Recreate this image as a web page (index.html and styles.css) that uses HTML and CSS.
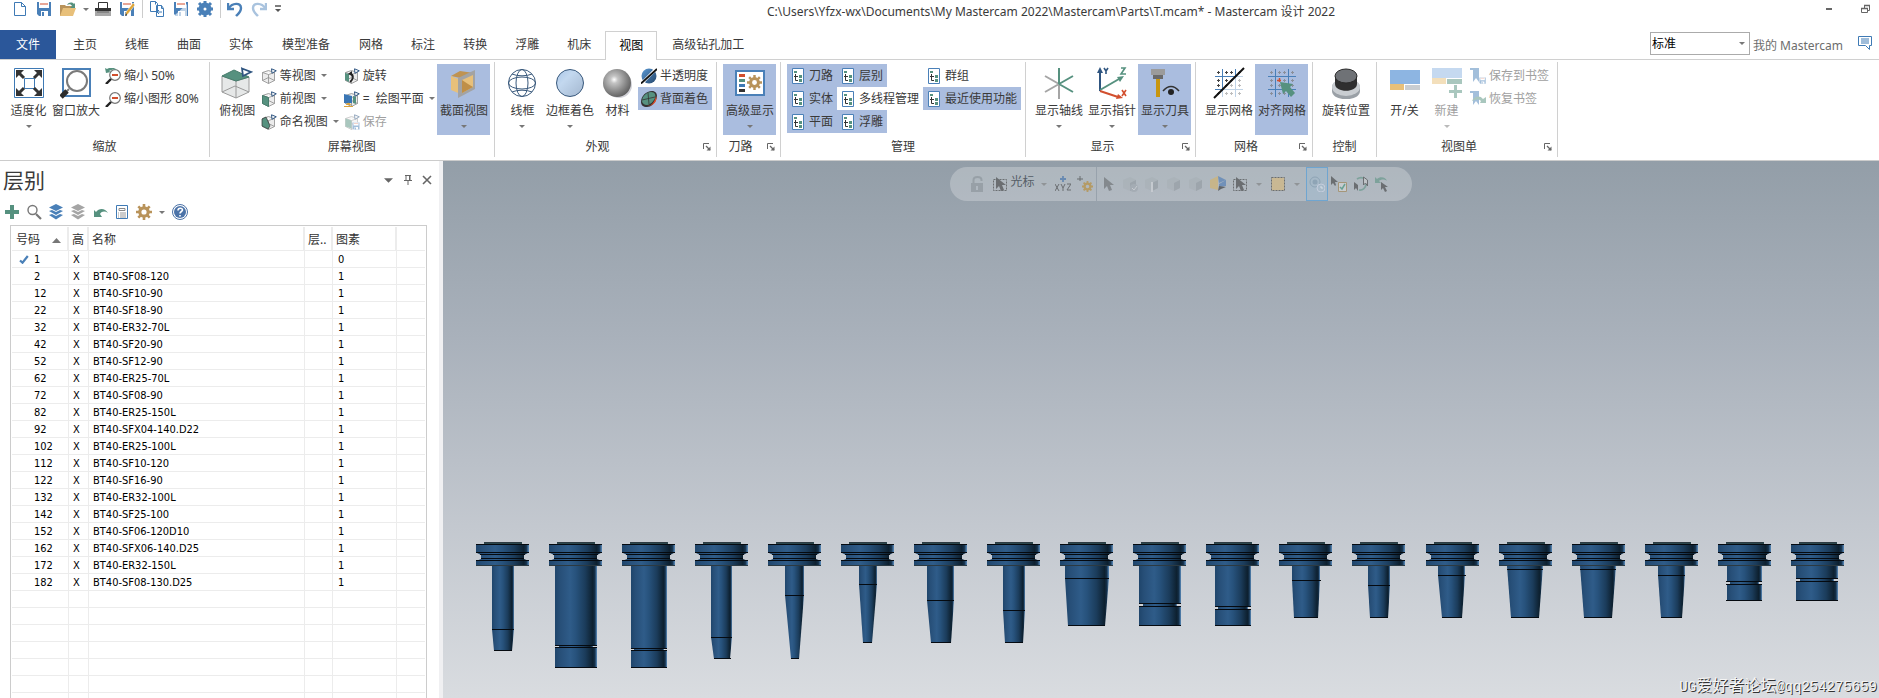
FILE: index.html
```html
<!DOCTYPE html>
<html lang="zh-CN">
<head>
<meta charset="utf-8">
<title>Mastercam 设计 2022</title>
<link rel="stylesheet" href="styles.css">
</head>
<body>
<svg class="sprite" aria-hidden="true">
  <defs>
    <linearGradient id="steel" x1="0" x2="1" y1="0" y2="0">
      <stop offset="0" stop-color="#1f456b"/><stop offset=".12" stop-color="#274f78"/><stop offset=".36" stop-color="#2f5c89"/>
      <stop offset=".5" stop-color="#27527c"/><stop offset=".72" stop-color="#1b3c5b"/><stop offset=".9" stop-color="#0d202f"/>
      <stop offset=".95" stop-color="#14304a"/><stop offset="1" stop-color="#5d8fc0"/>
    </linearGradient>
    <radialGradient id="ball" cx=".4" cy=".38" r=".65"><stop offset="0" stop-color="#fff"/><stop offset=".2" stop-color="#c4c4c4"/><stop offset=".65" stop-color="#8a8a8a"/><stop offset="1" stop-color="#5f5f5f"/></radialGradient>
    <linearGradient id="disc" x1="0" x2="1" y1="0" y2="1"><stop offset="0" stop-color="#a9c6e8"/><stop offset=".35" stop-color="#c3d8ef"/><stop offset="1" stop-color="#a3b7cf"/></linearGradient>
    <linearGradient id="disc2" x1="0" x2="1" y1="0" y2="1"><stop offset="0" stop-color="#5b9ad6"/><stop offset="1" stop-color="#24466b"/></linearGradient>
  </defs>
  <symbol id="i-new" viewBox="0 0 16 16"><path d="M2.500 1.500h7l4 4v9h-11z M9.500 1.500v4h4" fill="#fff" stroke="#3f7ab5"/></symbol>
  <symbol id="i-save" viewBox="0 0 16 16"><path d="M1 1h14v14H3l-2-2z" fill="#4a80b8"/><path d="M3 1h10v6H3z" fill="#fff"/><path d="M4 3h8" stroke="#d24f2e"/><path d="M5 10h7v5H5z" fill="#fff"/><path d="M6 11h2v4H6z" fill="#4a80b8"/></symbol>
  <symbol id="i-open" viewBox="0 0 16 16"><path d="M0 4h5l1 1h6v10H0z" fill="#b9935a"/><path d="M3 7h13l-3 8H0z" fill="#e8c07a"/><path d="M7 4c2-3 5-3 7-1l1-1v5h-5l2-2c-1-2-3-2-5-1z" fill="#56917f"/></symbol>
  <symbol id="i-print" viewBox="0 0 16 16"><path d="M3.500 1.500h9v6h-9z" fill="#fff" stroke="#333"/><path d="M0 7h16v5H0z" fill="#333"/><path d="M0 10h16v5H0z" fill="#a8a8a8"/><path d="M2 11h12" stroke="#666"/></symbol>
  <symbol id="i-saveedit" viewBox="0 0 16 16"><use href="#i-save"/><path d="M6 15l1-4 7-9 2 2-7 9z" fill="#e0a637" stroke="#fff" stroke-width=".5"/><path d="M6 15l1-3 1 2z" fill="#333"/></symbol>
  <symbol id="i-copy" viewBox="0 0 16 16"><path d="M1.500.5h5l2 2v8h-7z M7.500 4.500h5l2 3v8h-7z M12.500 4.500v3h2 M6.500.5v3" fill="#fff" stroke="#3f7ab5"/><path d="M9 11h4M10 9l-2 2 2 2" stroke="#3f7ab5" fill="none"/></symbol>
  <symbol id="i-saveas" viewBox="0 0 16 16"><use href="#i-save"/><path d="M2 14L14 3v12H3z" fill="#fff" opacity=".65"/></symbol>
  <symbol id="i-gear" viewBox="0 0 16 16"><circle cx="8" cy="8" r="4.200" fill="none" stroke="currentColor" stroke-width="3.200"/><path d="M8 0v4M8 12v4M0 8h4M12 8h4M2.300 2.300l2.800 2.800M10.900 10.900l2.800 2.800M2.300 13.700l2.800-2.800M10.900 5.100l2.800-2.800" stroke="currentColor" stroke-width="2.600"/></symbol>
  <symbol id="i-cog" viewBox="0 0 16 16"><circle cx="8" cy="8" r="4" fill="none" stroke="currentColor" stroke-width="5"/><path d="M8 0v4M8 12v4M0 8h4M12 8h4M2 2l3 3M11 11l3 3M2 14l3-3M11 5l3-3" stroke="currentColor" stroke-width="3"/></symbol>
  <symbol id="i-undo" viewBox="0 0 16 16"><path d="M1 2v6h6" fill="none" stroke="currentColor" stroke-width="2.400"/><path d="M2 7c3-5 12-6 12 0 0 4-3 6-5 8" fill="none" stroke="currentColor" stroke-width="2.400"/></symbol>
  <symbol id="i-redo" viewBox="0 0 16 16"><path d="M15 2v6H9" fill="none" stroke="currentColor" stroke-width="2.400"/><path d="M14 7C11 2 2 1 2 7c0 4 3 6 5 8" fill="none" stroke="currentColor" stroke-width="2.400"/></symbol>
  <symbol id="i-more" viewBox="0 0 6 8"><path d="M0 1h6" stroke="#555" stroke-width="1.500"/><path d="M0 4h6L3 7z" fill="#555"/></symbol>
  <symbol id="i-down" viewBox="0 0 6 3"><path d="M0 0h6L3 3z" fill="currentColor"/></symbol>
  <symbol id="i-launch" viewBox="0 0 8 8"><path d="M.5 6V.5H6" fill="none" stroke="#666"/><path d="M3 3l4 4" stroke="#666" stroke-width="1.200"/><path d="M7.500 3.500v4h-4z" fill="#666"/></symbol>

  <symbol id="i-fit" viewBox="0 0 32 32"><path d="M1.500 1.500h29v29h-29z M11.500 11.500h10v10h-10z" fill="#fff" stroke="#3f7ab5"/><path d="M4 4l7 7M28 4l-7 7M4 28l7-7M28 28l-7-7" stroke="#333" stroke-width="3"/><path d="M3 3h8l-8 8zM29 3v8l-8-8zM3 29v-8l8 8zM29 29h-8l8-8z" fill="#333"/></symbol>
  <symbol id="i-zoomwin" viewBox="0 0 32 32"><path d="M3 2h27v27H3z" fill="#fff" stroke="#4a80b8" stroke-width="2"/><circle cx="17" cy="14" r="10" fill="#fff" stroke="#7a7a7a" stroke-width="2"/><path d="M9 22l-3 3" stroke="#7a7a7a" stroke-width="2"/><path d="M7 24l-6 6" stroke="#2b2b2b" stroke-width="5"/></symbol>
  <symbol id="i-zoomout" viewBox="0 0 16 16"><circle cx="10" cy="7" r="5.300" fill="#fff" stroke="#777" stroke-width="1.200"/><path d="M7 7h6" stroke="#d24f2e" stroke-width="2"/><path d="M6 11l-5 5" stroke="#222" stroke-width="2.400"/></symbol>
  <symbol id="i-zoomhalf" viewBox="0 0 16 16"><use href="#i-zoomout"/><path d="M0 0l1 5 5-1-2-1c2-1 5-2 8-1C9-1 5-1 2 1z" fill="#56917f"/></symbol>
  <symbol id="i-cubetop" viewBox="0 0 32 32"><path d="M1 9v16l14 6 13-6V10L15 14z" fill="#e6e8e8" stroke="#9a9a9a"/><path d="M15 14v17M1 25l13-6 14 6" stroke="#9a9a9a" fill="none"/><path d="M1 9l12-6 15 7-13 4z" fill="#56917f" stroke="#477c6c"/><path d="M21 1.500l9 3.500-8 4z" fill="#fff" stroke="#2f5580" stroke-width="1.800"/></symbol>
  <symbol id="i-cube" viewBox="0 0 16 16"><path d="M1.500 4.500l6-2 6 2v8l-6 3-6-3z M1.500 4.500l6 2 6-2 M7.500 6.500v9 M1.500 12.500l6-3 6 3" fill="#ececec" stroke="#8d8d8d" stroke-width=".8"/><path d="M10.500.8l4.800 2-4.300 2.400z" fill="#fff" stroke="#2f5580"/></symbol>
  <symbol id="i-cubefront" viewBox="0 0 16 16"><use href="#i-cube"/><path d="M1.500 4.500l6 2v9l-6-3z" fill="#56917f" stroke="#477c6c"/></symbol>
  <symbol id="i-cubename" viewBox="0 0 16 16"><use href="#i-cube"/><path d="M1 5l4-2 4 9-2 3-6-3z" fill="#56917f" stroke="#333" stroke-width=".7"/></symbol>
  <symbol id="i-rotate" viewBox="0 0 16 16"><use href="#i-cube"/><path d="M1 5l4 1v8l-4-2z" fill="#56917f"/><path d="M6 14c4-3 4-7 0-9" fill="none" stroke="#222" stroke-width="1.600"/><path d="M4 6l4-3v5z" fill="#222"/></symbol>
  <symbol id="i-plane" viewBox="0 0 16 16"><use href="#i-cube"/><path d="M0 3l8 2v7H0z" fill="#3a76b4"/><path d="M9 5l3 1v7l-3-1z" fill="#56917f"/><path d="M0 15h9v1H0zM2 14c1-3 4-3 5 0z" fill="#d9a23a"/></symbol>
  <symbol id="i-cubesave" viewBox="0 0 16 16"><use href="#i-cube"/><path d="M1.500 4.500l6 2v8l-6-2z" fill="#56917f"/><g transform="translate(8 8) scale(.5)"><use href="#i-save" width="16" height="16"/></g></symbol>
  <symbol id="i-section" viewBox="0 0 32 32"><path d="M3 9l9-5 14 2-9 6z" fill="#bf9352"/><path d="M3 9l12 5v14L3 23z" fill="#e8c07a"/><path d="M10 11l17-8v19l-17 9z" fill="#a3a3a3"/><path d="M14 13l11-5v12l-11 6z" fill="#e8c07a"/><path d="M14 13v13l11-6-5-3z" fill="#bf8f48"/></symbol>
  <symbol id="i-wire" viewBox="0 0 32 32"><g fill="none" stroke="#39597c"><circle cx="16" cy="16" r="13.500"/><ellipse cx="16" cy="16" rx="6" ry="13.500"/><ellipse cx="16" cy="16" rx="13.500" ry="6"/><path d="M6 7a14 6 0 0 0 20 0M6 25a14 6 0 0 1 20 0"/></g></symbol>
  <symbol id="i-shade" viewBox="0 0 32 32"><circle cx="16" cy="16" r="13.500" fill="url(#disc)" stroke="#39597c"/></symbol>
  <symbol id="i-material" viewBox="0 0 32 32"><circle cx="18" cy="18" r="13" fill="#d2d2d8"/><circle cx="16" cy="16" r="14" fill="url(#ball)"/></symbol>
  <symbol id="i-half" viewBox="0 0 16 16"><circle cx="8" cy="8" r="7.500" fill="url(#disc2)"/><path d="M0 16L16 0" stroke="#fff" stroke-width="3"/><path d="M0 15.500L16 1" stroke="#111" stroke-width="1.800"/></symbol>
  <symbol id="i-back" viewBox="0 0 16 16"><path d="M0 11C0 5 5 0 11 0c5 0 6 5 4 9s-5 7-9 7-6-2-6-5z" fill="#333"/><path d="M6 15c5 0 8-5 9-10 2 5-3 11-9 10z" fill="#e04e28"/><path d="M1 10c0-5 5-9 9-9 4 0 5 3 4 6s-5 7-8 7-5-2-5-4z" fill="#56917f"/><path d="M1 9l13-3M7 2l1 11" stroke="#333" stroke-width=".8"/></symbol>
  <symbol id="i-adv" viewBox="0 0 32 32"><path d="M2 4h28v24H2z" fill="#fff" stroke="#4a80b8" stroke-width="2"/><path d="M5 7h6v3H5z" fill="#d24f2e"/><path d="M5 12h6v3H5z" fill="#56917f"/><path d="M5 17h6v3H5z" fill="#3f7ab5"/><path d="M5 22h6v3H5z" fill="#333"/><g transform="translate(13 8)" color="#b9935a"><use href="#i-gear" width="15" height="15"/></g></symbol>
  <symbol id="i-tree" viewBox="0 0 16 16"><path d="M2.500.5h11v15h-11z" fill="#fff" stroke="#4a80b8"/><path d="M4 3h3v2H4zM9 7h3v3H9zM9 11h3v3H9z" fill="#56917f"/><path d="M5.500 6v6.500H8M4 8.500h4" fill="none" stroke="#333"/></symbol>
  <symbol id="i-axes" viewBox="0 0 32 32"><path d="M16 17v15M16 17L2 25M16 17L2 9" stroke="#a5a5a5" stroke-width="2"/><path d="M16 17V1M16 17l14-8M16 17l14 8" stroke="#56917f" stroke-width="2"/></symbol>
  <symbol id="i-gnomon" viewBox="0 0 32 32"><path d="M4 24V4" stroke="#2f5580" stroke-width="2"/><path d="M4 0l3 6H1z" fill="#2f5580"/><path d="M4 23l19-11" stroke="#56917f" stroke-width="2"/><path d="M28 9l-4 6-3-5z" fill="#56917f"/><path d="M4 24l18 6" stroke="#d24f2e" stroke-width="2"/><path d="M27 31l-7 1 2-5z" fill="#d24f2e"/><g fill="none" stroke-width="1.600"><path d="M8 1l2 3 2-3M10 4v3" stroke="#2f5580"/><path d="M25 1h4l-4 6h5" stroke="#56917f"/><path d="M26 23l4 6M30 23l-4 6" stroke="#d24f2e"/></g></symbol>
  <symbol id="i-tool" viewBox="0 0 32 32"><path d="M2 2h14v6H2z" fill="#9b9b9b"/><path d="M4 8h10v4H4z" fill="#6a6a6a"/><path d="M7 12h4v18H7z" fill="#c8960f"/><path d="M14 24c5-6 11-6 16 0" fill="none" stroke="#333" stroke-width="1.500"/><circle cx="22" cy="25" r="3" fill="#222"/></symbol>
  <symbol id="i-gridlines" viewBox="0 0 32 32"><path d="M2 9.500h28M2 22.500h28M9.500 2v28M22.500 2v28" stroke="#4a80b8"/><path d="M4 5.500h3M5.500 4v3M12 5.500h3M13.500 4v3M17 5.500h3M18.500 4v3M25 5.500h3M26.500 4v3M4 13.500h3M5.500 12v3M12 13.500h3M13.500 12v3M17 13.500h3M18.500 12v3M25 13.500h3M26.500 12v3M4 18.500h3M5.500 17v3M12 18.500h3M13.500 17v3M17 18.500h3M18.500 17v3M25 18.500h3M26.500 17v3M4 26.500h3M5.500 25v3M12 26.500h3M13.500 25v3M17 26.500h3M18.500 25v3M25 26.500h3M26.500 25v3" stroke="currentColor"/></symbol>
  <symbol id="i-grid" viewBox="0 0 32 32"><g color="#444"><use href="#i-gridlines"/></g><path d="M2 31L31 2v29z" fill="#fff" opacity=".65"/><path d="M1 31L31 1" stroke="#111" stroke-width="2"/></symbol>
  <symbol id="i-snap" viewBox="0 0 32 32"><g color="#8a8f99"><use href="#i-gridlines"/></g><path d="M11 13.500h4M13.500 11v4" stroke="#d24f2e" stroke-width="1.500"/><path d="M14 15l13 2-3 3 5 6-4 4-5-6-3 3z" fill="#56917f"/></symbol>
  <symbol id="i-knob" viewBox="0 0 32 32"><path d="M2 20c0-10 28-10 28 0v4c0 11-28 11-28 0z" fill="#9aa0a6"/><ellipse cx="16" cy="20" rx="14" ry="9" fill="#c9cdd1"/><path d="M5 9h22v8c0 9-22 9-22 0z" fill="#2f2f2f"/><ellipse cx="16" cy="9" rx="11" ry="7" fill="#6f7276" stroke="#2a2a2a"/></symbol>
  <symbol id="i-sheet" viewBox="0 0 32 32"><path d="M1 3h30v14H1z" fill="#8db5e2"/><path d="M1 17h14v6H1z" fill="#e8c07a"/><path d="M16 18h15v5H16z" fill="#c9cdd1"/></symbol>
  <symbol id="i-sheetnew" viewBox="0 0 32 32"><path d="M1 1h30v10H1z" fill="#8db5e2"/><path d="M1 11h14v6H1z" fill="#e8c07a"/><path d="M16 12h15v5H16z" fill="#56917f"/><path d="M24.500 18v13M18 24.500h13" stroke="#56917f" stroke-width="3"/></symbol>
  <symbol id="i-bmsave" viewBox="0 0 16 16"><path d="M0 0h9v14l-3-4-3 4V2H0z" fill="#4a80b8"/><g transform="translate(9 9) scale(.45)"><use href="#i-save" width="16" height="16"/></g></symbol>
  <symbol id="i-bmload" viewBox="0 0 16 16"><path d="M0 0h9v14l-3-4-3 4V2H0z" fill="#4a80b8"/><path d="M2 10c2-5 8-6 11-2l3-2v6h-6l1-2c-3-3-6-1-9 0z" fill="#56917f"/></symbol>
  <symbol id="i-chat" viewBox="0 0 16 16"><path d="M1.500 1.500h13v9h-2v4l-4-4h-7z" fill="#fff" stroke="#3f7ab5"/><path d="M4 4h8M4 6h8M4 8h8" stroke="#3f7ab5"/></symbol>
  <symbol id="i-min" viewBox="0 0 8 8"><path d="M1 4h6" stroke="#666" stroke-width="2"/></symbol>
  <symbol id="i-restore" viewBox="0 0 10 10"><path d="M.5 4.500h6v4h-6zM3.500 4V1.500h5v5H7" fill="none" stroke="#666"/><path d="M3 1.500h6M0 4.500h7" stroke="#666" stroke-width="1.600"/></symbol>

  <symbol id="i-pin" viewBox="0 0 8 10"><path d="M1 .5h6M2 .5v5M6 .5v5M0 5.500h8M4 6v4" stroke="#666" fill="none"/><path d="M5 1h1v4H5z" fill="#666"/></symbol>
  <symbol id="i-x" viewBox="0 0 10 10"><path d="M1 1l8 8M9 1L1 9" stroke="#666" stroke-width="1.600"/></symbol>
  <symbol id="i-plus" viewBox="0 0 16 16"><path d="M8 1v14M1 8h14" stroke="#56917f" stroke-width="4"/></symbol>
  <symbol id="i-search" viewBox="0 0 16 16"><circle cx="6.500" cy="6" r="4.500" fill="none" stroke="#777" stroke-width="1.400"/><path d="M10 10l5 5" stroke="#777" stroke-width="2.200"/></symbol>
  <symbol id="i-layers" viewBox="0 0 16 16"><path d="M8 0l7 3.500L8 7 1 3.500z" fill="currentColor"/><path d="M1 7l3-1 4 2 4-2 3 1-7 4zM1 11l3-1 4 2 4-2 3 1-7 4.500z" fill="currentColor"/></symbol>
  <symbol id="i-back2" viewBox="0 0 16 16"><path d="M2 13V6l2 2c3-4 9-4 12 1-3-2-6-2-8 1l2 3z" fill="#56917f"/></symbol>
  <symbol id="i-list" viewBox="0 0 16 16"><path d="M2.500 1.500h11v13h-11z" fill="#fff" stroke="#3f7ab5"/><path d="M5 4.500h6v2H5z" fill="none" stroke="#888"/><path d="M4 9h1M6 9h6M4 11h1M6 11h6M4 13h1M6 13h6" stroke="#999"/></symbol>
  <symbol id="i-help" viewBox="0 0 16 16"><circle cx="8" cy="8" r="7.500" fill="#fff" stroke="#4a72a8"/><circle cx="8" cy="8" r="6" fill="#4a72a8"/><path d="M6 6.500c0-3 4.500-3 4.500-.5C10.500 7.500 8 7.500 8 9.500M8 11v1.600" fill="none" stroke="#fff" stroke-width="1.600"/></symbol>
  <symbol id="i-check" viewBox="0 0 10 9"><path d="M1 5.500l2.500 2.200L8.800 1" fill="none" stroke="#4a80b8" stroke-width="2.200"/></symbol>

  <symbol id="i-lock" viewBox="0 0 16 16"><path d="M4.500 7V4c0-4 8-4 8 0v1" fill="none" stroke="#858d94" stroke-width="2"/><path d="M2 7h12v9H2z" fill="#858d94"/><path d="M8 10v4" stroke="#b0b8c0" stroke-width="2"/></symbol>
  <symbol id="i-arrow" viewBox="0 0 16 16"><path d="M4 1v12l3-3 2 5 3-1-2-5h4z" fill="currentColor"/></symbol>
  <symbol id="i-cursel" viewBox="0 0 16 16"><path d="M1.500 3.500h13v11h-13z" fill="none" stroke="#333" stroke-dasharray="2 1"/><use href="#i-arrow"/></symbol>
  <symbol id="i-xyz" viewBox="0 0 16 16"><path d="M8 0v6M5 3h6" stroke="#2f66a8" stroke-width="1.800"/><path d="M0 8l4 7M4 8l-4 7M6 8l2 4 2-4M8 12v3M12 8h4l-4 6h4" stroke="#333" fill="none"/></symbol>
  <symbol id="i-plusgear" viewBox="0 0 16 16"><path d="M3 0v5M0 3h6" stroke="#333"/><g transform="translate(5 5)" color="#b8841f"><use href="#i-gear" width="11" height="11"/></g></symbol>
  <symbol id="i-solid" viewBox="0 0 16 16"><path d="M1 4l7-3 6 3v8l-6 3-7-3z" fill="#a3aab0"/><path d="M8 7l6-3v8l-6 3z" fill="#7b8389"/></symbol>
  <symbol id="i-solidcheck" viewBox="0 0 16 16"><use href="#i-solid"/><circle cx="12" cy="12" r="4" fill="#90989f"/><path d="M10 12l2 2 3-4" fill="none" stroke="#eee"/></symbol>
  <symbol id="i-solidedge" viewBox="0 0 16 16"><use href="#i-solid"/><path d="M8 6v10" stroke="#eee" stroke-width="2"/></symbol>
  <symbol id="i-color" viewBox="0 0 16 16"><path d="M0 4l8-4v14l-8-2z" fill="#d9b45f"/><path d="M8 0l8 4-7 3zM9 8l7-4v6l-7 1z" fill="#3f73b5"/><path d="M8 15l1-5 7 1-5 2z" fill="#222"/></symbol>
  <symbol id="i-area" viewBox="0 0 16 16"><path d="M1.500 1.500h13v13h-13z" fill="#dfb970" stroke="#333" stroke-dasharray="2 1"/></symbol>
  <symbol id="i-clock" viewBox="0 0 16 16"><circle cx="6" cy="6" r="5" fill="none" stroke="#7b93a8"/><circle cx="6" cy="6" r="2.500" fill="#7b93a8"/><circle cx="12" cy="12" r="4" fill="#a9bccb" stroke="#dde"/><path d="M12 10v2h2" stroke="#fff" fill="none"/></symbol>
  <symbol id="i-paste" viewBox="0 0 16 16"><path d="M0 0v9l2-2 2 3 1-1-1-3h3z" fill="#333"/><path d="M7.500 6.500h8v9h-8z" fill="#ddd" stroke="#9c7c40"/><path d="M9 11l2 2 3-5" fill="none" stroke="#2f8f70" stroke-width="1.500"/></symbol>
  <symbol id="i-cycle" viewBox="0 0 16 16"><path d="M4 3a7 7 0 0 1 8 0M13 8a6 6 0 0 1-7 6" fill="none" stroke="#56917f" stroke-width="1.600"/><path d="M1 6v8l2-2 2 3V9z" fill="#333"/><path d="M10.500 1v8l2-2 2 3V4z" fill="#ccc" stroke="#333"/></symbol>
  <symbol id="i-undosel" viewBox="0 0 16 16"><path d="M0 1v6h6L4 5c2-2 6-2 8 0-1-4-7-5-10-2z" fill="#56917f"/><path d="M6 6v8l2-2 2 4 2-1-2-4h3z" fill="#333"/></symbol>

  <symbol id="holder" viewBox="0 0 54 26" overflow="visible">
    <path d="M8 0h38v3H8z" fill="#2b474d"/>
    <path d="M0 2h53v9H0z" fill="url(#steel)"/>
    <path d="M1 11h51l-4 2v4l5 2H0l5-2v-4z" fill="url(#steel)"/>
    <path d="M0 19h53v5H0z" fill="url(#steel)"/>
    <path d="M0 2.500h53M0 10.500h53M4 12.500h45M5 16.500h43M0 18.500h53" stroke="#050a10" fill="none"/>
    <path d="M0 23.500h53M8 .5h37" stroke="#2c3a42"/>
  </symbol>
</svg>

<header class="titlebar">
  <nav class="quick" aria-label="快速访问">
    <button class="qbtn" aria-label="新建"><svg><use href="#i-new"/></svg></button>
    <button class="qbtn" aria-label="保存"><svg><use href="#i-save"/></svg></button>
    <button class="qbtn" aria-label="打开"><svg><use href="#i-open"/></svg></button>
    <button class="qbtn narrow" aria-label="最近文件"><svg class="caret"><use href="#i-down"/></svg></button>
    <button class="qbtn" aria-label="打印"><svg><use href="#i-print"/></svg></button>
    <button class="qbtn" aria-label="另存"><svg><use href="#i-saveedit"/></svg></button>
    <span class="qsep"></span>
    <button class="qbtn" aria-label="复制"><svg><use href="#i-copy"/></svg></button>
    <button class="qbtn" aria-label="部分保存"><svg><use href="#i-saveas"/></svg></button>
    <button class="qbtn blue" aria-label="设置"><svg><use href="#i-cog"/></svg></button>
    <span class="qsep"></span>
    <button class="qbtn blue" aria-label="撤销"><svg><use href="#i-undo"/></svg></button>
    <button class="qbtn pale" aria-label="重做"><svg><use href="#i-redo"/></svg></button>
    <button class="qbtn more" aria-label="更多"><svg><use href="#i-more"/></svg></button>
  </nav>
  <h1 class="doc-title">C:\Users\Yfzx-wx\Documents\My Mastercam 2022\Mastercam\Parts\T.mcam* - Mastercam 设计 2022</h1>
  <div class="winbtns">
    <button aria-label="最小化"><svg class="min"><use href="#i-min"/></svg></button>
    <button aria-label="还原"><svg class="restore"><use href="#i-restore"/></svg></button>
  </div>
</header>

<div class="tabs">
  <button class="file-tab">文件</button>
  <button class="tab">主页</button><button class="tab">线框</button><button class="tab">曲面</button><button class="tab">实体</button><button class="tab wide">模型准备</button><button class="tab">网格</button><button class="tab">标注</button><button class="tab">转换</button><button class="tab">浮雕</button><button class="tab">机床</button><button class="tab active">视图</button><button class="tab wide">高级钻孔加工</button>
  <div class="tabs-right">
    <div class="combo"><select aria-label="样式"><option>标准</option></select><svg class="caret"><use href="#i-down"/></svg></div>
    <a class="account" href="#">我的 Mastercam</a>
    <button class="chat" aria-label="消息"><svg><use href="#i-chat"/></svg></button>
  </div>
</div>

<div class="ribbon">
  <section class="group first">
    <div class="body">
      <button class="big"><svg><use href="#i-fit"/></svg><span>适度化</span><svg class="caret"><use href="#i-down"/></svg></button>
      <button class="big"><svg><use href="#i-zoomwin"/></svg><span>窗口放大</span></button>
      <div class="col">
        <button class="small"><svg><use href="#i-zoomhalf"/></svg>缩小 50%</button>
        <button class="small"><svg><use href="#i-zoomout"/></svg>缩小图形 80%</button>
      </div>
    </div>
    <footer><h2>缩放</h2></footer>
  </section>
  <section class="group">
    <div class="body">
      <button class="big"><svg><use href="#i-cubetop"/></svg><span>俯视图</span></button>
      <div class="col">
        <button class="small"><svg><use href="#i-cube"/></svg>等视图<svg class="caret"><use href="#i-down"/></svg></button>
        <button class="small"><svg><use href="#i-cubefront"/></svg>前视图<svg class="caret"><use href="#i-down"/></svg></button>
        <button class="small"><svg><use href="#i-cubename"/></svg>命名视图<svg class="caret"><use href="#i-down"/></svg></button>
      </div>
      <div class="col">
        <button class="small"><svg><use href="#i-rotate"/></svg>旋转</button>
        <button class="small"><svg><use href="#i-plane"/></svg><span class="eq">=</span>绘图平面<svg class="caret"><use href="#i-down"/></svg></button>
        <button class="small" disabled><svg><use href="#i-cubesave"/></svg>保存</button>
      </div>
      <button class="big on"><svg><use href="#i-section"/></svg><span>截面视图</span><svg class="caret"><use href="#i-down"/></svg></button>
    </div>
    <footer><h2>屏幕视图</h2></footer>
  </section>
  <section class="group">
    <div class="body">
      <button class="big"><svg><use href="#i-wire"/></svg><span>线框</span><svg class="caret"><use href="#i-down"/></svg></button>
      <button class="big"><svg><use href="#i-shade"/></svg><span>边框着色</span><svg class="caret"><use href="#i-down"/></svg></button>
      <button class="big"><svg><use href="#i-material"/></svg><span>材料</span></button>
      <div class="col">
        <button class="small"><svg><use href="#i-half"/></svg>半透明度</button>
        <button class="small on"><svg><use href="#i-back"/></svg>背面着色</button>
      </div>
    </div>
    <footer><h2>外观</h2><button class="launch" aria-label="外观选项"><svg><use href="#i-launch"/></svg></button></footer>
  </section>
  <section class="group">
    <div class="body">
      <button class="big on"><svg><use href="#i-adv"/></svg><span>高级显示</span><svg class="caret"><use href="#i-down"/></svg></button>
    </div>
    <footer><h2>刀路</h2><button class="launch" aria-label="刀路选项"><svg><use href="#i-launch"/></svg></button></footer>
  </section>
  <section class="group">
    <div class="body">
      <div class="col">
        <button class="small on"><svg><use href="#i-tree"/></svg>刀路</button>
        <button class="small on"><svg><use href="#i-tree"/></svg>实体</button>
        <button class="small on"><svg><use href="#i-tree"/></svg>平面</button>
      </div>
      <div class="col">
        <button class="small on"><svg><use href="#i-tree"/></svg>层别</button>
        <button class="small"><svg><use href="#i-tree"/></svg>多线程管理</button>
        <button class="small on"><svg><use href="#i-tree"/></svg>浮雕</button>
      </div>
      <div class="col">
        <button class="small"><svg><use href="#i-tree"/></svg>群组</button>
        <button class="small on"><svg><use href="#i-tree"/></svg>最近使用功能</button>
      </div>
    </div>
    <footer><h2>管理</h2></footer>
  </section>
  <section class="group">
    <div class="body">
      <button class="big"><svg><use href="#i-axes"/></svg><span>显示轴线</span><svg class="caret"><use href="#i-down"/></svg></button>
      <button class="big"><svg><use href="#i-gnomon"/></svg><span>显示指针</span><svg class="caret"><use href="#i-down"/></svg></button>
      <button class="big on"><svg><use href="#i-tool"/></svg><span>显示刀具</span><svg class="caret"><use href="#i-down"/></svg></button>
    </div>
    <footer><h2>显示</h2><button class="launch" aria-label="显示选项"><svg><use href="#i-launch"/></svg></button></footer>
  </section>
  <section class="group">
    <div class="body">
      <button class="big"><svg><use href="#i-grid"/></svg><span>显示网格</span></button>
      <button class="big on"><svg><use href="#i-snap"/></svg><span>对齐网格</span></button>
    </div>
    <footer><h2>网格</h2><button class="launch" aria-label="网格选项"><svg><use href="#i-launch"/></svg></button></footer>
  </section>
  <section class="group">
    <div class="body">
      <button class="big"><svg><use href="#i-knob"/></svg><span>旋转位置</span></button>
    </div>
    <footer><h2>控制</h2></footer>
  </section>
  <section class="group">
    <div class="body">
      <button class="big"><svg><use href="#i-sheet"/></svg><span>开/关</span></button>
      <button class="big" disabled><svg><use href="#i-sheetnew"/></svg><span>新建</span><svg class="caret"><use href="#i-down"/></svg></button>
      <div class="col">
        <button class="small" disabled><svg><use href="#i-bmsave"/></svg>保存到书签</button>
        <button class="small" disabled><svg><use href="#i-bmload"/></svg>恢复书签</button>
      </div>
    </div>
    <footer><h2>视图单</h2><button class="launch" aria-label="视图单选项"><svg><use href="#i-launch"/></svg></button></footer>
  </section>
</div>

<main class="work">
  <aside class="panel">
    <div class="panel-head">
      <h2>层别</h2>
      <button aria-label="菜单"><svg class="tri"><use href="#i-down"/></svg></button>
      <button aria-label="固定"><svg class="pin"><use href="#i-pin"/></svg></button>
      <button aria-label="关闭"><svg class="close"><use href="#i-x"/></svg></button>
    </div>
    <div class="panel-tools">
      <button aria-label="添加"><svg><use href="#i-plus"/></svg></button>
      <button aria-label="查找"><svg><use href="#i-search"/></svg></button>
      <button class="blue" aria-label="显示全部"><svg><use href="#i-layers"/></svg></button>
      <button class="grey" aria-label="隐藏全部"><svg><use href="#i-layers"/></svg></button>
      <button aria-label="还原"><svg><use href="#i-back2"/></svg></button>
      <button aria-label="报告"><svg><use href="#i-list"/></svg></button>
      <button class="gold" aria-label="选项"><svg><use href="#i-gear"/></svg></button>
      <button class="narrow" aria-label="更多选项"><svg class="caret"><use href="#i-down"/></svg></button>
      <button aria-label="帮助"><svg><use href="#i-help"/></svg></button>
    </div>
    <div class="list">
      <table>
        <colgroup><col class="c-num"><col class="c-high"><col class="c-name"><col class="c-set"><col class="c-ent"><col></colgroup>
        <thead><tr><th>号码<svg class="sort"><path d="M0 5h9L4.500 0z"/></svg></th><th>高</th><th>名称</th><th>层..</th><th>图素</th><th></th></tr></thead>
        <tbody>
          <tr><td><svg class="check"><use href="#i-check"/></svg>1</td><td>X</td><td></td><td></td><td>0</td><td></td></tr>
          <tr><td>2</td><td>X</td><td>BT40-SF08-120</td><td></td><td>1</td><td></td></tr>
          <tr><td>12</td><td>X</td><td>BT40-SF10-90</td><td></td><td>1</td><td></td></tr>
          <tr><td>22</td><td>X</td><td>BT40-SF18-90</td><td></td><td>1</td><td></td></tr>
          <tr><td>32</td><td>X</td><td>BT40-ER32-70L</td><td></td><td>1</td><td></td></tr>
          <tr><td>42</td><td>X</td><td>BT40-SF20-90</td><td></td><td>1</td><td></td></tr>
          <tr><td>52</td><td>X</td><td>BT40-SF12-90</td><td></td><td>1</td><td></td></tr>
          <tr><td>62</td><td>X</td><td>BT40-ER25-70L</td><td></td><td>1</td><td></td></tr>
          <tr><td>72</td><td>X</td><td>BT40-SF08-90</td><td></td><td>1</td><td></td></tr>
          <tr><td>82</td><td>X</td><td>BT40-ER25-150L</td><td></td><td>1</td><td></td></tr>
          <tr><td>92</td><td>X</td><td>BT40-SFX04-140.D22</td><td></td><td>1</td><td></td></tr>
          <tr><td>102</td><td>X</td><td>BT40-ER25-100L</td><td></td><td>1</td><td></td></tr>
          <tr><td>112</td><td>X</td><td>BT40-SF10-120</td><td></td><td>1</td><td></td></tr>
          <tr><td>122</td><td>X</td><td>BT40-SF16-90</td><td></td><td>1</td><td></td></tr>
          <tr><td>132</td><td>X</td><td>BT40-ER32-100L</td><td></td><td>1</td><td></td></tr>
          <tr><td>142</td><td>X</td><td>BT40-SF25-100</td><td></td><td>1</td><td></td></tr>
          <tr><td>152</td><td>X</td><td>BT40-SF06-120D10</td><td></td><td>1</td><td></td></tr>
          <tr><td>162</td><td>X</td><td>BT40-SFX06-140.D25</td><td></td><td>1</td><td></td></tr>
          <tr><td>172</td><td>X</td><td>BT40-ER32-150L</td><td></td><td>1</td><td></td></tr>
          <tr><td>182</td><td>X</td><td>BT40-SF08-130.D25</td><td></td><td>1</td><td></td></tr>
          <tr><td></td><td></td><td></td><td></td><td></td><td></td></tr>
          <tr><td></td><td></td><td></td><td></td><td></td><td></td></tr>
          <tr><td></td><td></td><td></td><td></td><td></td><td></td></tr>
          <tr><td></td><td></td><td></td><td></td><td></td><td></td></tr>
          <tr><td></td><td></td><td></td><td></td><td></td><td></td></tr>
          <tr><td></td><td></td><td></td><td></td><td></td><td></td></tr>
          <tr><td></td><td></td><td></td><td></td><td></td><td></td></tr>
        </tbody>
      </table>
    </div>
  </aside>

  <div class="viewport">
    <svg class="scene" viewBox="443 161 1436 537" role="img" aria-label="刀柄模型">
      <g fill="url(#steel)" stroke="none">
        <g transform="translate(476 542)"><path d="M16 24h22v63l-2 22H18l-2-22z"/><path d="M16 87.500h22M18 108.500h18" stroke="#050a10"/><use href="#holder" width="54" height="26"/></g>
        <g transform="translate(549 542)"><path d="M6 24h42v80H6z"/><path d="M10 104h34v1H10z"/><path d="M6 105h42v21H6z"/><path d="M6 103.500h42M6 105.500h42M6 125.500h42" stroke="#050a10"/><use href="#holder" width="54" height="26"/></g>
        <g transform="translate(622 542)"><path d="M9 24h36v83H9z"/><path d="M12 107h30v1H12z"/><path d="M9 108h36v18H9z"/><path d="M9 106.500h36M9 108.500h36M9 125.500h36" stroke="#050a10"/><use href="#holder" width="54" height="26"/></g>
        <g transform="translate(695 542)"><path d="M16 24h21v71l-2 22H19l-3-22z"/><path d="M16 95.500h21M19 116.500h17" stroke="#050a10"/><use href="#holder" width="54" height="26"/></g>
        <g transform="translate(768 542)"><path d="M17 24h19v29l-5 64h-8l-6-64z"/><path d="M17 53.500h19M23 116.500h8" stroke="#050a10"/><use href="#holder" width="54" height="26"/></g>
        <g transform="translate(841 542)"><path d="M18 24h18v18l-5 59h-9l-4-59z"/><path d="M18 42.500h18M22 100.500h9" stroke="#050a10"/><use href="#holder" width="54" height="26"/></g>
        <g transform="translate(914 542)"><path d="M13 24h27v34l-3 43H17l-4-43z"/><path d="M13 58.500h27M17 100.500h20" stroke="#050a10"/><use href="#holder" width="54" height="26"/></g>
        <g transform="translate(987 542)"><path d="M16 24h22v44l-2 33H18l-2-33z"/><path d="M16 68.500h22M18 100.500h18" stroke="#050a10"/><use href="#holder" width="54" height="26"/></g>
        <g transform="translate(1060 542)"><path d="M5 24h44v12l-4 48H8L5 36z"/><path d="M5 36.500h44M8 83.500h37" stroke="#050a10"/><use href="#holder" width="54" height="26"/></g>
        <g transform="translate(1133 542)"><path d="M6 24h42v38H6z"/><path d="M10 62h34v2H10z"/><path d="M6 64h42v20H6z"/><path d="M6 61.500h42M6 64.500h42M6 83.500h42" stroke="#050a10"/><use href="#holder" width="54" height="26"/></g>
        <g transform="translate(1206 542)"><path d="M9 24h36v41H9z"/><path d="M12 65h30v2H12z"/><path d="M9 67h36v17H9z"/><path d="M9 64.500h36M9 67.500h36M9 83.500h36" stroke="#050a10"/><use href="#holder" width="54" height="26"/></g>
        <g transform="translate(1279 542)"><path d="M13 24h28v14l-2 38H15l-2-38z"/><path d="M13 38.500h29M15 75.500h24" stroke="#050a10"/><use href="#holder" width="54" height="26"/></g>
        <g transform="translate(1352 542)"><path d="M16 24h22v19l-2 33H18l-2-33z"/><path d="M16 43.500h22M18 75.500h18" stroke="#050a10"/><use href="#holder" width="54" height="26"/></g>
        <g transform="translate(1426 542)"><path d="M12 24h27v9l-3 43H16l-4-43z"/><path d="M12 33.500h28M16 75.500h20" stroke="#050a10"/><use href="#holder" width="54" height="26"/></g>
        <g transform="translate(1499 542)"><path d="M8 24h36l-4 52H12z"/><path d="M8 27.500h36M12 75.500h28" stroke="#050a10"/><use href="#holder" width="54" height="26"/></g>
        <g transform="translate(1572 542)"><path d="M8 24h36l-4 52H12z"/><path d="M8 27.500h36M12 75.500h28" stroke="#050a10"/><use href="#holder" width="54" height="26"/></g>
        <g transform="translate(1645 542)"><path d="M13 24h27v9l-3 43H16l-3-43z"/><path d="M13 33.500h27M16 75.500h21" stroke="#050a10"/><use href="#holder" width="54" height="26"/></g>
        <g transform="translate(1718 542)"><path d="M9 24h35v16H9z"/><path d="M12 40h29v2H12z"/><path d="M9 42h35v17H9z"/><path d="M8 39.500h36M8 42.500h36M8 58.500h36" stroke="#050a10"/><use href="#holder" width="54" height="26"/></g>
        <g transform="translate(1791 542)"><path d="M5 24h42v13H5z"/><path d="M9 37h34v2H9z"/><path d="M5 39h42v20H5z"/><path d="M5 36.500h42M5 39.500h42M5 58.500h42" stroke="#050a10"/><use href="#holder" width="54" height="26"/></g>
      </g>
    </svg>
    <div class="selbar">
      <button aria-label="锁定"><svg><use href="#i-lock"/></svg></button>
      <button class="cursor"><svg><use href="#i-cursel"/></svg><span>光标</span></button>
      <button class="narrow" aria-label="光标选项"><svg class="caret"><use href="#i-down"/></svg></button>
      <button aria-label="坐标"><svg><use href="#i-xyz"/></svg></button>
      <button aria-label="自动抓点设置"><svg><use href="#i-plusgear"/></svg></button>
      <span class="bar-sep"></span>
      <button class="dim" aria-label="选择"><svg><use href="#i-arrow"/></svg></button>
      <button class="dim" aria-label="实体选择"><svg><use href="#i-solidcheck"/></svg></button>
      <button class="dim" aria-label="边选择"><svg><use href="#i-solidedge"/></svg></button>
      <button class="dim" aria-label="面选择"><svg><use href="#i-solid"/></svg></button>
      <button class="dim" aria-label="主体选择"><svg><use href="#i-solid"/></svg></button>
      <button aria-label="背面选择"><svg><use href="#i-color"/></svg></button>
      <button aria-label="选择方式"><svg><use href="#i-cursel"/></svg></button>
      <button class="narrow" aria-label="选择方式选项"><svg class="caret"><use href="#i-down"/></svg></button>
      <button aria-label="范围"><svg><use href="#i-area"/></svg></button>
      <button class="narrow" aria-label="范围选项"><svg class="caret"><use href="#i-down"/></svg></button>
      <button class="picked" aria-label="上次选择"><svg><use href="#i-clock"/></svg></button>
      <button aria-label="验证选择"><svg><use href="#i-paste"/></svg></button>
      <button aria-label="反选"><svg><use href="#i-cycle"/></svg></button>
      <button aria-label="撤销选择"><svg><use href="#i-undosel"/></svg></button>
    </div>
    <p class="watermark">UG<span>爱好者论坛</span>@qq254275659</p>
  </div>
</main>
</body>
</html>
```

FILE: styles.css
```css
* { box-sizing: border-box; }

body {
  margin: 0;
  height: 100vh;
  display: flex;
  flex-direction: column;
  overflow: hidden;
  background: #fff;
  color: #3a3a3a;
  font: 12px/16px "Noto Sans", "Noto Sans CJK SC", sans-serif;
}

button {
  margin: 0;
  padding: 0;
  border: 0;
  background: none;
  color: inherit;
  font: inherit;
  white-space: nowrap;
}

h1, h2, p { margin: 0; font: inherit; }
svg { display: block; flex: none; width: 16px; height: 16px; }
.sprite { position: absolute; width: 0; height: 0; }
.caret { width: 6px; height: 3px; color: #777; }
.blue { color: #4a80b8; }
.pale { color: #a9c3de; }
.grey { color: #a5a5a5; }
.gold { color: #b9935a; }

/* Title bar */
.titlebar { display: flex; height: 30px; flex: none; }
.quick { display: flex; height: 18px; padding-left: 8px; }
.qbtn { display: flex; align-items: center; justify-content: center; width: 24px; }
.qbtn.narrow { width: 11px; }
.qbtn.more { width: 14px; }
.qbtn.more svg { width: 6px; height: 8px; }
.qsep { width: 1px; margin: 0 2px 0 3px; background: #ccc; }
.doc-title { flex: 1; text-align: center; line-height: 24px; white-space: nowrap; }
.winbtns { display: flex; width: 62px; height: 18px; justify-content: space-between; align-items: center; padding: 0 8px; }
.winbtns .min { width: 8px; height: 8px; }
.winbtns .restore { width: 10px; height: 10px; }

/* Tabs */
.tabs { display: flex; flex: none; height: 30px; border-bottom: 1px solid #d0d0d0; }
.file-tab { padding: 0 16px; margin-right: 3px; background: #2b579a; color: #fff; }
.tab { padding: 0 14px; }
.tab.wide { padding: 0 15px; }
.tab.active { height: 29px; margin: 1px 0 -1px; padding: 0 13px; border: 1px solid #d0d0d0; border-bottom: 0; background: #fff; color: #000; position: relative; }
.tabs-right { display: flex; align-items: flex-start; margin-left: auto; padding: 2px 6px 0 0; }
.combo { position: relative; width: 100px; height: 23px; }
.combo select { width: 100%; height: 100%; padding: 0 1px; border: 1px solid #ababab; border-radius: 0; background: #fff; color: #000; font: inherit; appearance: none; }
.combo .caret { position: absolute; right: 5px; top: 10px; }
.account { min-width: 92px; margin: 6px 12px 0 3px; color: #6d6d6d; text-decoration: none; white-space: nowrap; }
.chat { margin-top: 3px; }

/* Ribbon */
.ribbon { display: flex; flex: none; height: 101px; padding: 2px 0 3px; border-bottom: 1px solid #ccc; }
.group { display: flex; flex-direction: column; padding-top: 2px; border-right: 1px solid #d0d0d0; }
.body { display: flex; height: 71px; padding: 0 4px 0 6px; }
.first .body { padding: 0 6px 0 7px; }
.big { display: flex; flex-direction: column; align-items: center; min-width: 42px; padding: 3px 2px 0 3px; }
.big svg { width: 32px; height: 32px; }
.big span { margin-top: 4px; }
.big .caret { width: 6px; height: 3px; margin-top: 6px; }
.col { display: flex; flex-direction: column; align-items: flex-start; }
.small { display: flex; align-items: center; gap: 3px; height: 23px; padding: 0 4px 0 3px; }
.small .caret { margin: 0 -2px 0 2px; }
.eq { width: 10px; text-align: left; }
.on { background: #aabddf; }
button:disabled { color: #a0a0a0; }
button:disabled svg { opacity: .5; }
.group footer { display: flex; flex: 1; align-items: center; padding-top: 2px; }
.group h2 { flex: 1; text-align: center; }
.launch { width: 16px; padding-left: 3px; }
.launch svg { width: 8px; height: 8px; }

/* Layer panel */
.work { display: flex; flex: 1; min-height: 0; }
.panel { display: flex; flex-direction: column; width: 443px; flex: none; padding: 0 12px 0 0; border-right: 4px solid #f0f0f2; }
.panel-head { display: flex; align-items: center; height: 38px; flex: none; margin-right: -9px; padding-left: 3px; }
.panel-head h2 { flex: 1; font-size: 21px; line-height: 30px; }
.panel-head button { width: 19px; display: flex; justify-content: center; }
.panel-head .tri { width: 9px; height: 5px; color: #666; }
.panel-head .pin { width: 8px; height: 10px; }
.panel-head .close { width: 10px; height: 10px; }
.panel-tools { display: flex; align-items: center; height: 26px; flex: none; padding-left: 1px; }
.panel-tools button { display: flex; justify-content: center; width: 22px; }
.panel-tools .narrow { width: 14px; }
.list { flex: 1; min-height: 0; overflow: hidden; margin-left: 10px; padding: 1px 1px 0; border: 1px solid #ccc; border-bottom: 0; }
table { width: 100%; border-collapse: separate; border-spacing: 0; table-layout: fixed; color: #000; font: 11px/14px "DejaVu Sans Condensed", "Noto Sans", sans-serif; }
.c-num { width: 57px; }
.c-high { width: 20px; }
.c-name { width: 216px; }
.c-set { width: 28px; }
.c-ent { width: 64px; }
th, td { padding: 2px 0 0; border-right: 1px solid #ececec; border-bottom: 1px solid #ececec; text-align: left; white-space: nowrap; overflow: hidden; }
th:last-child, td:last-child { border-right: 0; }
th { height: 24px; padding-left: 3px; border-right-width: 2px; font: 12px/16px "Noto Sans", "Noto Sans CJK SC", sans-serif; color: #333; }
th:first-child { padding-left: 4px; }
td { height: 17px; padding-left: 4px; }
td:first-child { padding-left: 22px; }
td:nth-child(5) { padding-left: 5px; }
.sort { display: inline-block; width: 9px; height: 5px; margin-left: 12px; vertical-align: middle; fill: #777; }
.check { float: left; width: 10px; height: 9px; margin: 2px 0 0 -15px; }

/* Graphics viewport */
.viewport { position: relative; flex: 1; min-width: 0; overflow: hidden; background: linear-gradient(#939ea8, #a9b1bb 33%, #c3c8cf 68%, #d9dce0); }
.scene { width: 100%; height: auto; }
.selbar { position: absolute; left: 507px; top: 6px; display: flex; align-items: center; height: 34px; padding: 0 18px 0 16px; border-radius: 17px; background: rgba(255, 255, 255, .25); color: #333; }
.selbar button { display: flex; align-items: center; justify-content: center; width: 22px; height: 34px; }
.selbar svg { opacity: .55; }
.selbar .cursor { width: 48px; gap: 2px; color: #555d66; padding-left: 3px; }
.selbar .cursor span { padding-bottom: 4px; }
.selbar .cursor svg { color: #333; }
.selbar .narrow { width: 16px; }
.selbar .dim svg { opacity: .35; }
.selbar .picked { margin-left: 1px; border: 1px solid #6fa5d0; background: rgba(150, 185, 215, .35); }
.bar-sep { width: 1px; height: 34px; background: #98a2ac; }
.watermark { position: absolute; right: 2px; bottom: 1px; color: #f4f4f4; font: 14px/20px "Liberation Mono", "Noto Sans CJK SC", monospace; text-shadow: 1px 1px 0 #333; white-space: nowrap; }
.watermark span { font-size: 16px; }
```
